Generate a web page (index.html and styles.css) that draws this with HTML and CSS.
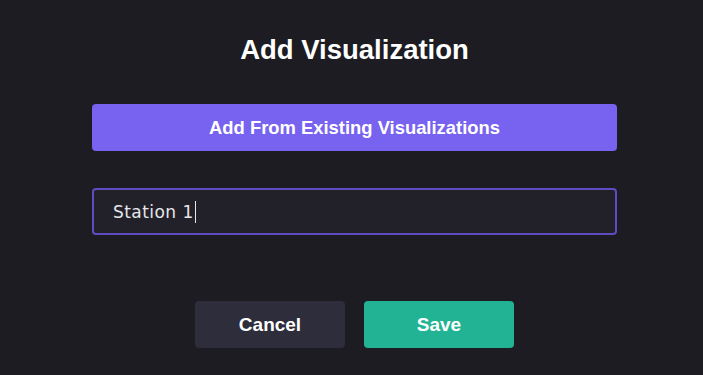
FILE: index.html
```html
<!DOCTYPE html>
<html lang="en">
<head>
  <meta charset="UTF-8" />
  <meta name="viewport" content="width=device-width, initial-scale=1.0"/>
  <title>Add Visualization</title>
  <link rel="stylesheet" href="styles.css">
</head>
<body>
  <div class="dialog">
    <h2 class="title">Add Visualization</h2>

    <button class="existing-btn">Add From Existing Visualizations</button>

    <div class="name-field">
      <span class="name-text">Station 1</span><span class="caret"></span>
    </div>

    <div class="actions">
      <button class="cancel-btn">Cancel</button>
      <button class="save-btn">Save</button>
    </div>
  </div>
</body>
</html>
```

FILE: styles.css
```css
body {
  margin: 0;
  background: #1d1c22;
  font-family: "Liberation Sans", Arial, sans-serif;
  color: #fff;
}

.dialog {
  width: 525px;
  margin-left: 92px;
  padding-top: 35px;
  display: flex;
  flex-direction: column;
}

.title {
  margin: 0;
  text-align: center;
  font-size: 27.5px;
  line-height: 30px;
  font-weight: bold;
}

.existing-btn {
  margin-top: 39px;
  height: 47px;
  border: none;
  border-radius: 4px;
  background: #7862f0;
  color: #fff;
  font-family: inherit;
  font-size: 18.4px;
  font-weight: bold;
}

.name-field {
  margin-top: 37px;
  height: 47px;
  box-sizing: border-box;
  border: 2px solid #5f4cc4;
  border-radius: 4px;
  background: #22212a;
  display: flex;
  align-items: center;
  padding-left: 19px;
}

.name-text {
  font-family: "DejaVu Sans", Verdana, sans-serif;
  font-size: 17px;
  letter-spacing: 0.45px;
  color: #e6e6ea;
}

.caret {
  width: 1px;
  height: 22px;
  background: #e6e6ea;
  margin-left: 1px;
}

.actions {
  margin-top: 66px;
  display: flex;
  justify-content: center;
  gap: 19px;
}

.actions button {
  width: 150px;
  height: 47px;
  border: none;
  border-radius: 4px;
  color: #fff;
  font-family: inherit;
  font-size: 19px;
  font-weight: bold;
}

.cancel-btn {
  background: #2e2d3b;
  color: #e8e8ec;
}

.save-btn {
  background: #22b394;
}
```
